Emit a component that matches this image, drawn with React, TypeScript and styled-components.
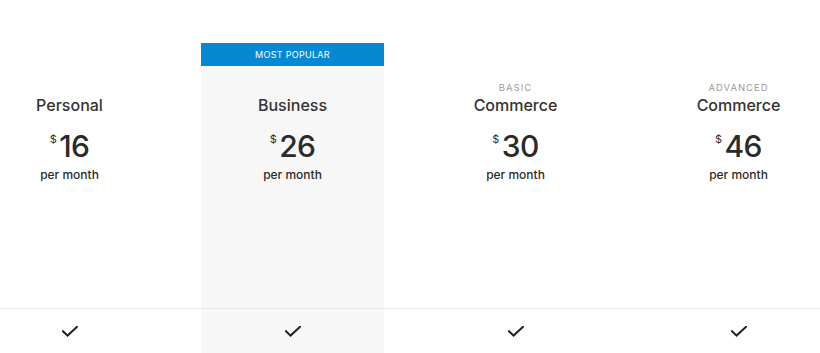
import React from "react";
import styled, { createGlobalStyle } from "styled-components";

type Plan = {
  eyebrow?: string;
  name: string;
  price: number;
  popular?: boolean;
};

const plans: Array<Plan> = [
  { name: "Personal", price: 16 },
  { name: "Business", price: 26, popular: true },
  { eyebrow: "BASIC", name: "Commerce", price: 30 },
  { eyebrow: "ADVANCED", name: "Commerce", price: 46 },
];

function Check() {
  return (
    <svg width="16" height="11" viewBox="0 0 16 11" fill="none">
      <path
        d="M1 5.2L5.6 9.6L15 0.8"
        stroke="#222"
        strokeWidth="2"
        strokeLinecap="square"
      />
    </svg>
  );
}

function App() {
  return (
    <>
      <GlobalStyle />
      <Table>
        <HeaderRow>
          {plans.map((plan, index) => (
            <HeaderCell key={index}>
              <Banner $show={!!plan.popular}>
                {plan.popular ? "MOST POPULAR" : ""}
              </Banner>
              <PlanInfo $highlight={!!plan.popular}>
                <Eyebrow>{plan.eyebrow}</Eyebrow>
                <Title>{plan.name}</Title>
                <Price>
                  <span className="currency">$</span>
                  {plan.price}
                </Price>
                <Period>per month</Period>
              </PlanInfo>
            </HeaderCell>
          ))}
        </HeaderRow>
        <FeatureRow>
          {plans.map((plan, index) => (
            <FeatureCell key={index} $highlight={!!plan.popular}>
              <Check />
            </FeatureCell>
          ))}
        </FeatureRow>
      </Table>
    </>
  );
}

export default App;

const GlobalStyle = createGlobalStyle`
  html, body {
    margin: 0;
    padding: 0;
    background: #fff;
    overflow: hidden;
  }
  body {
    font-family: Inter, "Noto Sans", "Liberation Sans", sans-serif;
    color: #2b2b2b;
  }
`;

const Table = styled.div`
  width: 892px;
  margin-left: -42px;
  padding-top: 43px;
`;

const HeaderRow = styled.div`
  display: grid;
  grid-template-columns: repeat(4, 223px);
`;

const HeaderCell = styled.div`
  display: flex;
  flex-direction: column;
  align-items: stretch;
  padding: 0 20px;
`;

const Banner = styled.div<{ $show: boolean }>`
  height: 23px;
  display: flex;
  align-items: center;
  justify-content: center;
  background: ${(p) => (p.$show ? "#0788d2" : "transparent")};
  color: #fff;
  font-size: 9px;
  font-weight: 400;
  letter-spacing: 0.3px;
`;

const PlanInfo = styled.div<{ $highlight: boolean }>`
  height: 242px;
  box-sizing: border-box;
  padding-top: 15px;
  display: flex;
  flex-direction: column;
  align-items: center;
  background: ${(p) => (p.$highlight ? "#f7f7f7" : "transparent")};
`;

const Eyebrow = styled.div`
  height: 14px;
  line-height: 14px;
  font-size: 9.5px;
  letter-spacing: 1px;
  color: #9a9a9a;
`;

const Title = styled.div`
  font-size: 16px;
  line-height: 21px;
  font-weight: 500;
  color: #333;
`;

const Price = styled.div`
  margin-top: 12px;
  display: flex;
  align-items: flex-start;
  font-size: 30px;
  line-height: 36px;
  font-weight: 500;
  color: #2b2b2b;
  letter-spacing: -0.6px;
  .currency {
    font-size: 11px;
    line-height: 11px;
    font-weight: 400;
    margin-top: 6px;
    margin-right: 3px;
  }
`;

const Period = styled.div`
  margin-top: 2px;
  font-size: 12px;
  line-height: 18px;
  font-weight: 500;
  color: #2b2b2b;
`;

const FeatureRow = styled.div`
  display: grid;
  grid-template-columns: repeat(4, 223px);
  border-top: 1px solid #e8e8e8;
`;

const FeatureCell = styled.div<{ $highlight: boolean }>`
  height: 44px;
  padding: 0 20px;
  display: flex;
  align-items: center;
  justify-content: center;
  background: ${(p) => (p.$highlight ? "#f7f7f7" : "transparent")};
  background-clip: content-box;
`;
